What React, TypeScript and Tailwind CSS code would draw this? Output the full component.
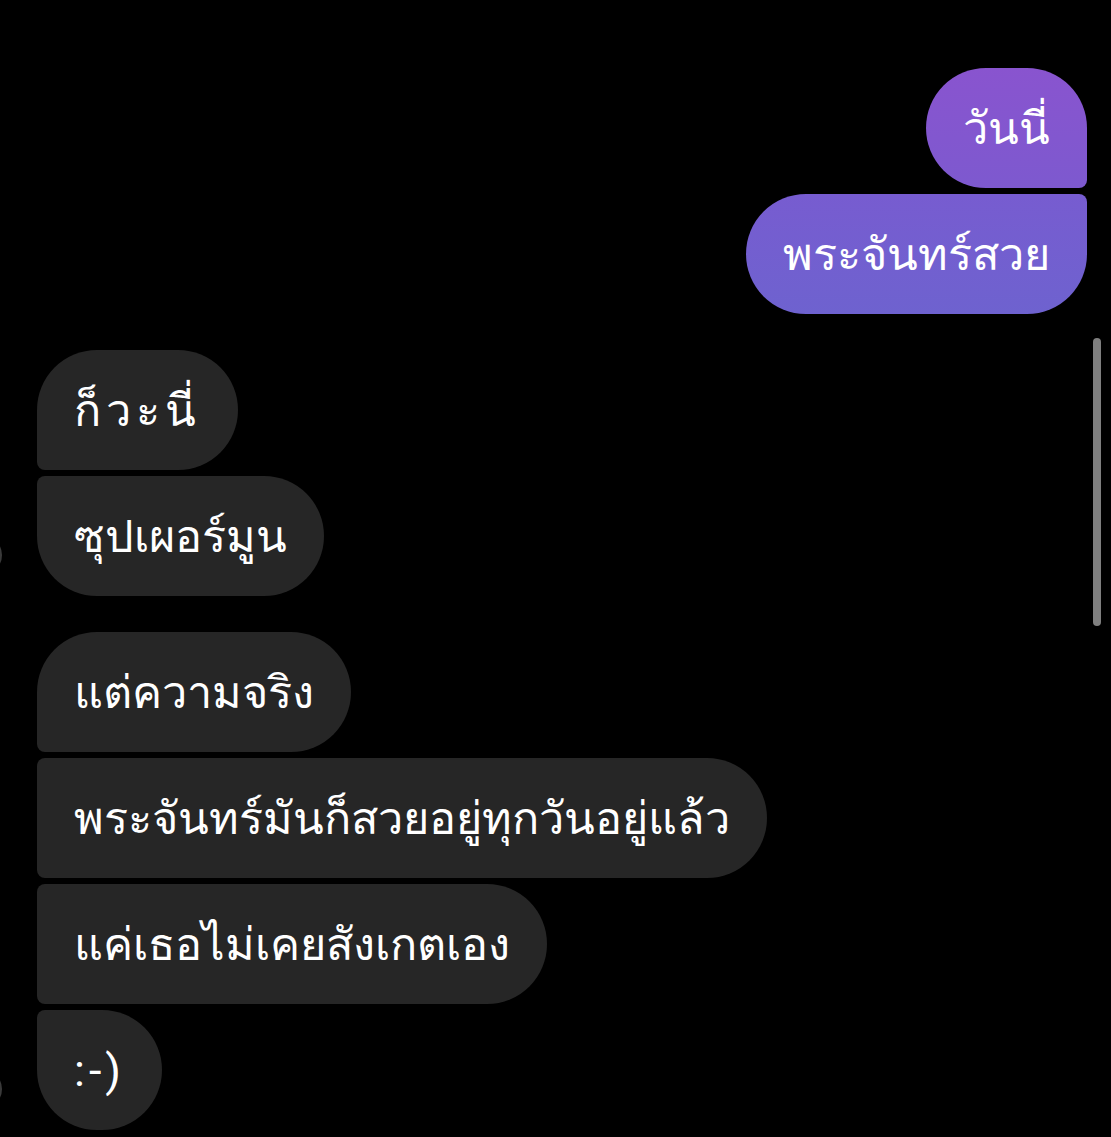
import React from "react";

type Msg = { text: string; side: "me" | "them"; shape: string; bg?: string; avatar?: boolean; extra?: string };

const groups: Msg[][] = [
    [
        { text: "วันนี่", side: "me", shape: "rounded-[60px] rounded-br-[8px]", bg: "bg-gradient-to-b from-[#8954cf] to-[#7d59cf]" },
        { text: "พระจันทร์สวย", side: "me", shape: "rounded-[60px] rounded-tr-[8px]", bg: "bg-gradient-to-b from-[#775cd0] to-[#6e62cf]" },
    ],
    [
        { text: "ก็วะนี่", side: "them", shape: "rounded-[60px] rounded-bl-[8px]", extra: "tracking-[5px]" },
        { text: "ซุปเผอร์มูน", side: "them", shape: "rounded-[60px] rounded-tl-[8px]", avatar: true },
    ],
    [
        { text: "แต่ความจริง", side: "them", shape: "rounded-[60px] rounded-bl-[8px]" },
        { text: "พระจันทร์มันก็สวยอยู่ทุกวันอยู่แล้ว", side: "them", shape: "rounded-[60px] rounded-l-[8px]" },
        { text: "แค่เธอไม่เคยสังเกตเอง", side: "them", shape: "rounded-[60px] rounded-l-[8px]" },
        { text: ":-)", side: "them", shape: "rounded-[60px] rounded-tl-[8px]", avatar: true, extra: "tracking-[4px]" },
    ],
];

function Bubble({ msg }: { msg: Msg }) {
    const isMe = msg.side === "me";
    return (
        <div className={isMe ? "flex justify-end" : "flex items-end justify-start"}>
            {msg.avatar && (
                // edge of the sender avatar, mostly off screen
                <div className="shrink-0 w-[40px] h-[40px] -ml-[75px] mr-[35px] mb-[21px] rounded-full border-2 border-[#3a3a3a]" />
            )}
            <div
                className={`h-[120px] flex items-center px-[37px] text-white text-[45px] ${msg.shape} ${
                    isMe ? msg.bg : "bg-[#262626]"
                }`}
            >
                <span className={`leading-none whitespace-nowrap ${msg.extra ?? ""}`}>{msg.text}</span>
            </div>
        </div>
    );
}

export default function App() {
    return (
        <div className="relative w-[1111px] h-[1137px] overflow-hidden bg-black font-['Roboto','Liberation_Sans',sans-serif]">
            <div className="flex flex-col gap-[36px] pt-[68px] pl-[37px] pr-[24px]">
                {groups.map((g, i) => (
                    <div key={i} className="flex flex-col gap-[6px]">
                        {g.map((m, j) => (
                            <Bubble key={j} msg={m} />
                        ))}
                    </div>
                ))}
            </div>
            {/* scrollbar thumb */}
            <div className="absolute left-[1093px] top-[338px] w-[8px] h-[288px] rounded-full bg-[#7f7f7f]" />
        </div>
    );
}
